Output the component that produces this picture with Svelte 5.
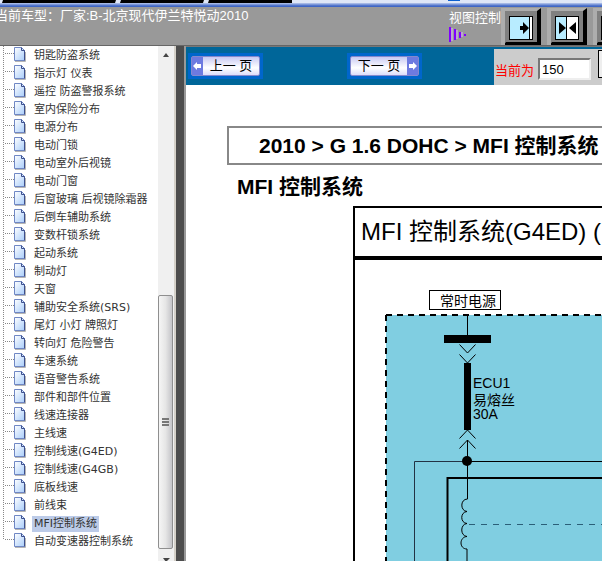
<script>
  const items = [
    '钥匙防盗系统',
    '指示灯 仪表',
    '遥控 防盗警报系统',
    '室内保险分布',
    '电源分布',
    '电动门锁',
    '电动室外后视镜',
    '电动门窗',
    '后窗玻璃 后视镜除霜器',
    '后倒车辅助系统',
    '变数杆锁系统',
    '起动系统',
    '制动灯',
    '天窗',
    '辅助安全系统(SRS)',
    '尾灯 小灯 牌照灯',
    '转向灯 危险警告',
    '车速系统',
    '语音警告系统',
    '部件和部件位置',
    '线速连接器',
    '主线速',
    '控制线速(G4ED)',
    '控制线速(G4GB)',
    '底板线速',
    '前线束',
    'MFI控制系统',
    '自动变速器控制系统'
  ];

  let selected = 'MFI控制系统';
  let zoom = '150';

  const views = ['right', 'both', 'left'];
</script>

<div class="page">
  <div class="strip">
    <svg width="602" height="3">
      <path d="M3 0H116L115 3H2ZM121 0H204L203 3H120ZM209 0H292V3H208Z" fill="#000" />
      <rect x="448" width="12" height="1" fill="#0a5fd0" />
    </svg>
  </div>

  <header>
    <h1>当前车型：厂家:B-北京现代伊兰特悦动2010</h1>
    <div class="view-label">
      <span>视图控制</span>
      <svg width="20" height="15" fill="#8000ff">
        <path d="M0 0h2v15h-2z" />
        <path d="M3 1v13M8 3v9M13 5v5" stroke="#d9b8ff" />
        <path d="M5 2h2v11h-2zM10 5h2v6h-2zM15 7h2v2h-2z" />
      </svg>
    </div>
    <div class="views">
      {#each views as view}
        <button aria-label="view {view}">
          <svg width="40" height="37">
            <rect width="40" height="37" fill="#adadad" />
            <path d="M4 37V35L36 3L40 0V37Z" fill="#000" />
            <rect x="4" y="3" width="32" height="31" fill="#808080" />
            <rect x="8" y="8" width="24" height="24" fill="#000" />
            {#if view === 'right'}
              <rect x="9" y="9" width="19" height="22" fill="#b8ecff" />
              <rect x="29" y="9" width="2" height="22" fill="#fff" />
              <path d="M19 18h3v-4l6 6l-6 6v-4h-3z" fill="#000" />
            {:else if view === 'both'}
              <rect x="9" y="9" width="10" height="22" fill="#b8ecff" />
              <rect x="20" y="9" width="11" height="22" fill="#fff" />
              <path d="M12 14l7 6l-7 6zM29 14l-7 6l7 6z" fill="#000" />
            {:else}
              <rect x="9" y="9" width="2" height="22" fill="#b8ecff" />
              <rect x="12" y="9" width="19" height="22" fill="#fff" />
              <path d="M21 18h-3v-4l-6 6l6 6v-4h3z" fill="#000" />
            {/if}
          </svg>
        </button>
      {/each}
    </div>
  </header>

  <div class="body">
    <nav>
      <ul>
        {#each items as item, i}
          <li>
            <svg width="32" height="18">
              <defs>
                <linearGradient id="paper" x2="1" y2="1">
                  <stop offset="0" stop-color="#fff" />
                  <stop offset="1" stop-color="#a9cdfa" />
                </linearGradient>
              </defs>
              <path d={i === items.length - 1 ? 'M3.5 0V8' : 'M3.5 0V18'} class="branch" />
              <path d="M5 7.5H14" class="branch" />
              <path d="M15 15.5H25.5V6" fill="none" stroke="#b5b5b5" />
              <path d="M14.5 1.5H21.5L24.5 4.5V14.5H14.5Z" fill="url(#paper)" stroke="#6f87c4" />
              <path d="M21.5 1.5V4.5H24.5V14.5" fill="none" stroke="#3d4f8d" />
            </svg>
            <a href="#{i}" class:selected={item === selected} on:click={() => (selected = item)}>{item}</a>
          </li>
        {/each}
      </ul>
      <div class="scrollbar">
        <svg class="arrow" width="16" height="17"><path d="M5 11L8 7L11 11Z" fill="#444" /></svg>
        <div class="track"></div>
        <div class="thumb"><i></i><i></i><i></i></div>
        <svg class="arrow" width="16" height="12"><path d="M5 9H12L8 13Z" fill="#444" /></svg>
      </div>
    </nav>

    <div class="divider"></div>

    <main>
      <div class="toolbar">
        <button class="pager">
          <span class="face">
            <svg width="11" height="18"><rect width="11" height="18" fill="#6d7ae0" /><path d="M1 9l4-4v2h4v4h-4v2z" fill="#fff" /></svg>
            <span>上一 页</span>
          </span>
        </button>
        <button class="pager">
          <span class="face">
            <span>下一 页</span>
            <svg width="11" height="18"><rect width="11" height="18" fill="#6d7ae0" /><path d="M10 9l-4-4v2h-4v4h4v2z" fill="#fff" /></svg>
          </span>
        </button>
        <form>
          <label for="zoom">当前为</label>
          <input id="zoom" type="text" bind:value={zoom} />
          <button type="button" class="go" aria-label="go"></button>
        </form>
      </div>

      <div class="document">
        <div class="crumbs">2010 &gt; G 1.6 DOHC &gt; MFI 控制系统</div>
        <h2>MFI 控制系统</h2>
        <section class="sheet">
          <h3>MFI 控制系统(G4ED) (1)</h3>
          <svg class="circuit" width="600" height="400" fill="none" stroke="#000">
            <rect x="31" y="55" width="640" height="500" fill="#80cee1" stroke="none" />
            <path d="M31 55H600" stroke-width="2" stroke-dasharray="6 5" />
            <path d="M31 55V400" stroke-width="2" stroke-dasharray="6 5" />

            <rect x="74.5" y="30.5" width="71" height="19" fill="#fff" />
            <text x="85" y="46">常时电源</text>

            <path d="M112.5 56V75M112.5 180V239M112 289V400" />
            <rect x="89" y="75" width="47" height="8" fill="#000" stroke="none" />
            <path d="M104.5 84.5L112.5 93L120.5 84.5M104.5 94.5L112.5 103L120.5 94.5" />
            <rect x="109" y="103" width="7" height="67" fill="#000" stroke="none" />
            <path d="M104.5 178.5L112.5 170L120.5 178.5M104.5 188.5L112.5 180L120.5 188.5" />

            <path d="M112 201.5H600" />
            <path d="M112 201.5H59.5V400" stroke="#234" />
            <circle cx="112" cy="201" r="5" fill="#000" stroke="none" />
            <path d="M92.5 400V218H600" stroke-width="2" />
            <path d="M112.5 239C105 239 105 251 112 251.500C105 252 105 263 112 263.500C105 264 105 276 112 276.500C104 277 104 289 112 289" />
            <path d="M114 264.500H600" stroke="#2b5f78" stroke-dasharray="6 6" />

            <text x="118" y="128">ECU1</text>
            <text x="118" y="145">易熔丝</text>
            <text x="118" y="159">30A</text>
          </svg>
        </section>
      </div>
    </main>
  </div>
</div>

<style>
  :global(body) {
    overflow: hidden;
  }

  .page {
    display: flex;
    flex-direction: column;
    height: 100vh;
    overflow: hidden;
    background: #fff;
    color: #000;
    font-family: 'Liberation Sans', 'Noto Sans CJK SC', sans-serif;
    font-size: 13px;
  }

  svg {
    display: block;
    flex: none;
  }

  button {
    padding: 0;
    border: 0;
    background: none;
    font: inherit;
    color: inherit;
  }

  h1,
  h2,
  h3 {
    margin: 0;
    white-space: nowrap;
  }

  .strip {
    flex: none;
    height: 7px;
    background: linear-gradient(#dfe7f7 0 3px, #b9c8ec 3px, #3f66c5 6px);
  }

  header {
    display: flex;
    flex: none;
    height: 38px;
    border-bottom: 1px solid #666;
    background: #999;
    color: #fff;
    overflow: hidden;
  }

  h1 {
    flex: none;
    width: 454px;
    margin-left: -5px;
    font-size: 13px;
    font-weight: normal;
    line-height: 18px;
  }

  .view-label {
    flex: none;
    width: 52px;
    padding-top: 2px;
    line-height: 18px;
    white-space: nowrap;
  }

  .views {
    display: flex;
    gap: 6px;
    padding-top: 1px;
  }

  .body {
    display: flex;
    flex: 1;
    min-height: 0;
  }

  nav {
    display: flex;
    flex: none;
    width: 174px;
    overflow: hidden;
  }

  ul {
    flex: 1;
    margin: 0;
    padding: 0;
    list-style: none;
    font-family: 'DejaVu Sans', 'Noto Sans CJK SC', sans-serif;
    font-size: 11px;
  }

  li {
    display: flex;
    align-items: flex-end;
    height: 18px;
  }

  li a {
    padding: 0 2px;
    line-height: 16px;
    color: #333;
    text-decoration: none;
    white-space: nowrap;
  }

  li a.selected {
    background: #bccbe8;
  }

  .branch {
    fill: none;
    stroke: #888;
    stroke-dasharray: 1 1;
  }

  .scrollbar {
    display: flex;
    flex-direction: column;
    width: 16px;
    background: #f0f0f0;
  }

  .track {
    flex: 12;
  }

  .thumb {
    display: flex;
    flex: 13;
    flex-direction: column;
    align-items: center;
    justify-content: center;
    gap: 1px;
    margin-right: 1px;
    border: 1px solid #8f8f8f;
    border-radius: 2px;
    background: linear-gradient(90deg, #f5f5f5, #e6e6e6 50%, #c4c4c8);
  }

  .thumb i {
    width: 7px;
    height: 2px;
    background: #777;
  }

  .divider {
    flex: none;
    width: 8px;
    border: solid #d4d0c8;
    border-width: 0 0 0 2px;
    border-right: 2px solid #999;
    background: #4d4d4d;
  }

  main {
    flex: 1;
    min-width: 0;
    overflow: hidden;
  }

  .toolbar {
    display: flex;
    align-items: center;
    height: 39px;
    padding: 2px 0 0 2px;
    box-sizing: border-box;
    border-top: 1px solid #777;
    background: #069;
    overflow: hidden;
  }

  .pager {
    flex: none;
    padding: 3px;
    margin-right: 84px;
    margin-bottom: 2px;
    background: #06c;
  }

  .pager + .pager {
    margin-right: 72px;
  }

  .face {
    display: flex;
    width: 67px;
    border: 1px solid #8588cc;
    border-radius: 2px;
    background: linear-gradient(#c8c9f3, #fff 60%, #dcdcfa);
    line-height: 18px;
  }

  .face span {
    flex: 1;
    text-align: center;
  }

  form {
    display: flex;
    flex: 1 0 auto;
    align-items: center;
    height: 36px;
    background: #ccc;
  }

  label {
    padding-top: 8px;
    margin: 0 4px 0 1px;
    color: #f00;
    line-height: 16px;
  }

  input {
    box-sizing: border-box;
    width: 53px;
    height: 22px;
    margin-top: 4px;
    padding: 0 2px;
    border: 2px solid;
    border-color: #777 #eee #eee #777;
    background: #fff;
    font: 13px 'Liberation Sans', sans-serif;
  }

  .go {
    width: 24px;
    height: 28px;
    margin: 0 0 6px 7px;
    border: 1px solid #000;
    background: #eee;
  }

  .document {
    padding: 41px 0 0 41px;
    overflow: hidden;
  }

  .crumbs {
    width: 700px;
    padding-left: 30px;
    border: 2px solid #888;
    font-size: 21px;
    font-weight: bold;
    line-height: 35px;
    white-space: nowrap;
  }

  h2 {
    padding: 2px 0 0 10px;
    font-size: 21px;
    line-height: 39px;
  }

  .sheet {
    width: 600px;
    margin-left: 126px;
    border: 2px solid #000;
    overflow: hidden;
  }

  h3 {
    padding-left: 6px;
    border-bottom: 4px solid #000;
    font-size: 24px;
    font-weight: normal;
    line-height: 48px;
  }

  .circuit text {
    fill: #000;
    stroke: none;
    font-size: 14px;
  }
</style>
